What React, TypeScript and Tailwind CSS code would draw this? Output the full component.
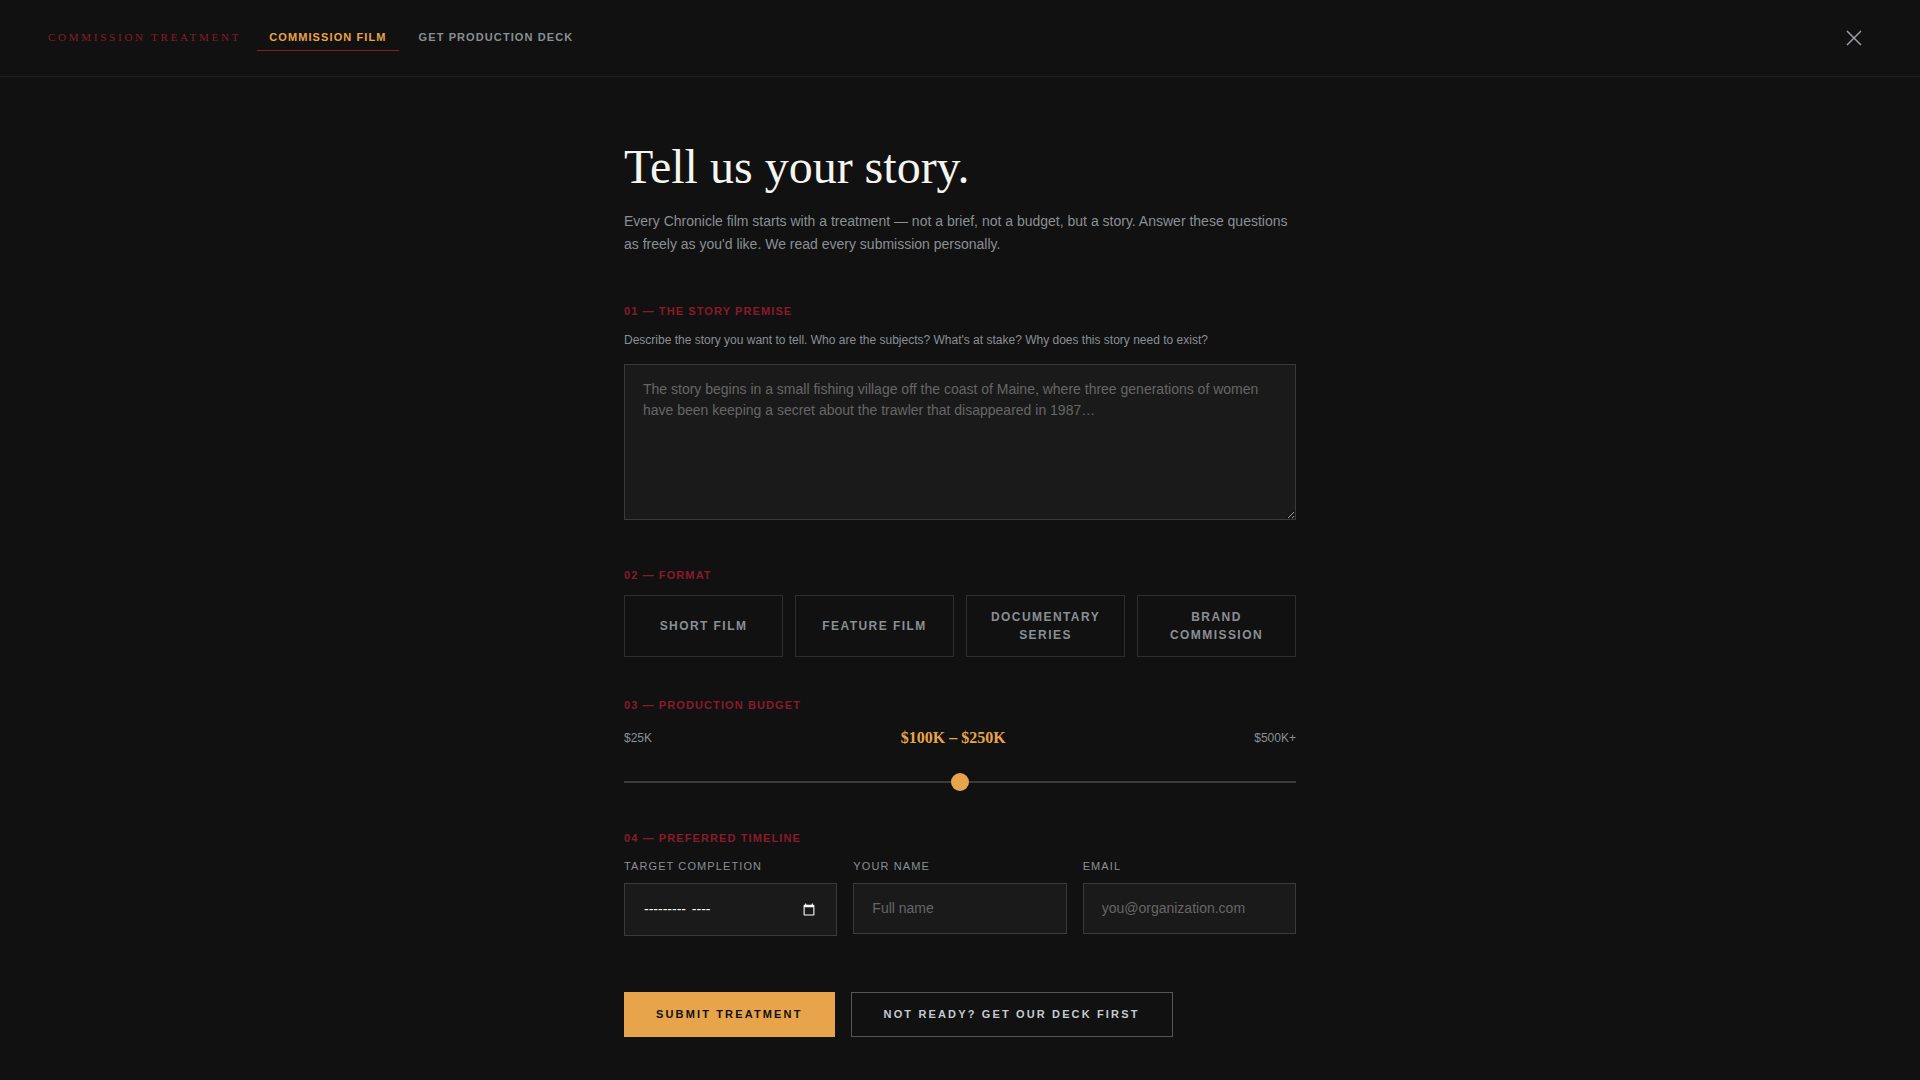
import { useState } from 'react'
import type { FormEvent } from 'react'

const TABS = ['Commission Film', 'Get Production Deck']

const FORMATS = ['Short Film', 'Feature Film', 'Documentary Series', 'Brand Commission']

const BUDGETS = ['$25K – $50K', '$50K – $100K', '$100K – $250K', '$250K – $500K', '$500K+']

const sectionLabel = 'block text-[11px] leading-4 font-bold tracking-widest uppercase text-[#8b1a2b]'
const fieldLabel = 'block mb-[9px] text-[11px] leading-4 tracking-widest uppercase text-[#8a8f94]'
const fieldInput =
  'block w-full px-[18px] py-[14px] border border-[#3a3a3a] bg-[#1a1a1a] text-[14px] leading-[21px] text-[#f5f5f0] placeholder-[#666666] outline-none focus:border-[#e8a44a]'

export default function App() {
  const [tab, setTab] = useState(TABS[0])
  const [format, setFormat] = useState('')
  const [budget, setBudget] = useState(2)
  const [dateFocused, setDateFocused] = useState(false)
  const [form, setForm] = useState({ premise: '', date: '', name: '', email: '' })

  const showDateHint = !form.date && !dateFocused

  const handleSubmit = (e: FormEvent) => {
    e.preventDefault()
  }

  return (
    <div className="min-h-screen bg-[#111111] font-['Liberation_Sans',Arial,sans-serif] text-[#f5f5f0]">
      {/* Top bar */}
      <header className="flex items-center justify-between px-12 py-6 border-b border-[#1f1f1f]">
        <div className="flex items-baseline gap-4">
          <span className="font-['Liberation_Serif',serif] text-[11px] leading-4 tracking-[0.25em] uppercase text-[#8b1a2b]">
            Commission Treatment
          </span>
          <nav className="flex gap-2">
            {TABS.map((name) => (
              <button
                key={name}
                type="button"
                onClick={() => setTab(name)}
                className={`px-3 py-1 border-b text-[11px] leading-[17px] font-bold tracking-widest uppercase cursor-pointer ${
                  tab === name ? 'border-[#8b1a2b] text-[#e8a44a]' : 'border-transparent text-[#8a8f94]'
                }`}
              >
                {name}
              </button>
            ))}
          </nav>
        </div>
        <button type="button" aria-label="Close" className="px-1 text-[#9a9fa4] cursor-pointer">
          <svg width="28" height="28" viewBox="0 0 28 28" fill="none" stroke="currentColor" strokeWidth="1.5">
            <path d="M7 7l14 14M21 7L7 21" />
          </svg>
        </button>
      </header>

      <main className="max-w-[672px] mx-auto pt-16 pb-10">
        <h1 className="font-['Liberation_Serif',serif] text-[48px] leading-[52px]">Tell us your story.</h1>
        <p className="mt-[17px] text-[14px] leading-[23px] text-[#8a8f94]">
          Every Chronicle film starts with a treatment — not a brief, not a budget, but a story. Answer these
          questions as freely as you'd like. We read every submission personally.
        </p>

        <form onSubmit={handleSubmit} className="mt-[47px]">
          {/* Premise */}
          <section>
            <label htmlFor="premise" className={sectionLabel}>
              01 — The Story Premise
            </label>
            <p className="mt-3 mb-[15px] text-[12px] leading-[18px] text-[#8a8f94]">
              Describe the story you want to tell. Who are the subjects? What's at stake? Why does this story need to
              exist?
            </p>
            <textarea
              id="premise"
              rows={6}
              value={form.premise}
              onChange={(e) => setForm({ ...form, premise: e.target.value })}
              placeholder="The story begins in a small fishing village off the coast of Maine, where three generations of women have been keeping a secret about the trawler that disappeared in 1987…"
              className={`${fieldInput} resize-y`}
            />
          </section>

          {/* Format */}
          <section className="mt-[47px]">
            <h2 className={sectionLabel}>02 — Format</h2>
            <div className="mt-3 grid grid-cols-4 gap-3">
              {FORMATS.map((name) => (
                <button
                  key={name}
                  type="button"
                  aria-pressed={format === name}
                  onClick={() => setFormat(name)}
                  className={`px-4 py-3 border text-[12px] leading-[18px] font-bold tracking-[0.12em] uppercase cursor-pointer ${
                    format === name ? 'border-[#e8a44a] text-[#e8a44a]' : 'border-[#2e2e2e] text-[#8a8f94]'
                  }`}
                >
                  {name}
                </button>
              ))}
            </div>
          </section>

          {/* Budget */}
          <section className="mt-10">
            <label htmlFor="budget" className={sectionLabel}>
              03 — Production Budget
            </label>
            <div className="mt-3 flex items-center justify-between text-[12px] leading-[26px] text-[#8a8f94]">
              <span>$25K</span>
              <span className="font-['Liberation_Serif',serif] text-[16px] font-bold text-[#e8a44a]">
                {BUDGETS[budget]}
              </span>
              <span>$500K+</span>
            </div>
            <input
              id="budget"
              type="range"
              min={0}
              max={4}
              value={budget}
              onChange={(e) => setBudget(Number(e.target.value))}
              className="mt-[30px] block w-full h-[2px] appearance-none bg-[#3a3a3a] outline-none cursor-pointer [&::-webkit-slider-thumb]:appearance-none [&::-webkit-slider-thumb]:size-[18px] [&::-webkit-slider-thumb]:rounded-full [&::-webkit-slider-thumb]:bg-[#e8a44a]"
            />
          </section>

          {/* Timeline and contact */}
          <section className="mt-[47px]">
            <h2 className={sectionLabel}>04 — Preferred Timeline</h2>
            <div className="mt-3 grid grid-cols-3 items-start gap-4">
              <div>
                <label htmlFor="date" className={fieldLabel}>
                  Target Completion
                </label>
                <div className="relative">
                  <input
                    id="date"
                    type="month"
                    value={form.date}
                    onChange={(e) => setForm({ ...form, date: e.target.value })}
                    onFocus={() => setDateFocused(true)}
                    onBlur={() => setDateFocused(false)}
                    className={`${fieldInput} h-[53px] scheme-dark ${
                      showDateHint ? '[&::-webkit-datetime-edit]:opacity-0' : ''
                    }`}
                  />
                  {/* same empty hint in every locale */}
                  {showDateHint && (
                    <div className="absolute inset-0 flex items-center px-[19px] text-[14px] leading-[21px] pointer-events-none">
                      <div>
                        <span className="px-px">---------</span> <span className="px-px">----</span>
                      </div>
                    </div>
                  )}
                </div>
              </div>
              <div>
                <label htmlFor="name" className={fieldLabel}>
                  Your Name
                </label>
                <input
                  id="name"
                  type="text"
                  value={form.name}
                  onChange={(e) => setForm({ ...form, name: e.target.value })}
                  placeholder="Full name"
                  className={fieldInput}
                />
              </div>
              <div>
                <label htmlFor="email" className={fieldLabel}>
                  Email
                </label>
                <input
                  id="email"
                  type="email"
                  value={form.email}
                  onChange={(e) => setForm({ ...form, email: e.target.value })}
                  placeholder="you@organization.com"
                  className={fieldInput}
                />
              </div>
            </div>
          </section>

          <div className="mt-14 flex gap-4">
            <button
              type="submit"
              className="px-8 py-[14px] bg-[#e8a44a] text-[11px] leading-[17px] font-bold tracking-[0.195em] uppercase text-[#111111] cursor-pointer"
            >
              Submit Treatment
            </button>
            <button
              type="button"
              onClick={() => setTab(TABS[1])}
              className="px-8 py-[13px] border border-[#555555] text-[11px] leading-[17px] font-bold tracking-[0.195em] uppercase text-[#c5cad0] cursor-pointer"
            >
              Not Ready? Get Our Deck First
            </button>
          </div>
        </form>
      </main>
    </div>
  )
}
